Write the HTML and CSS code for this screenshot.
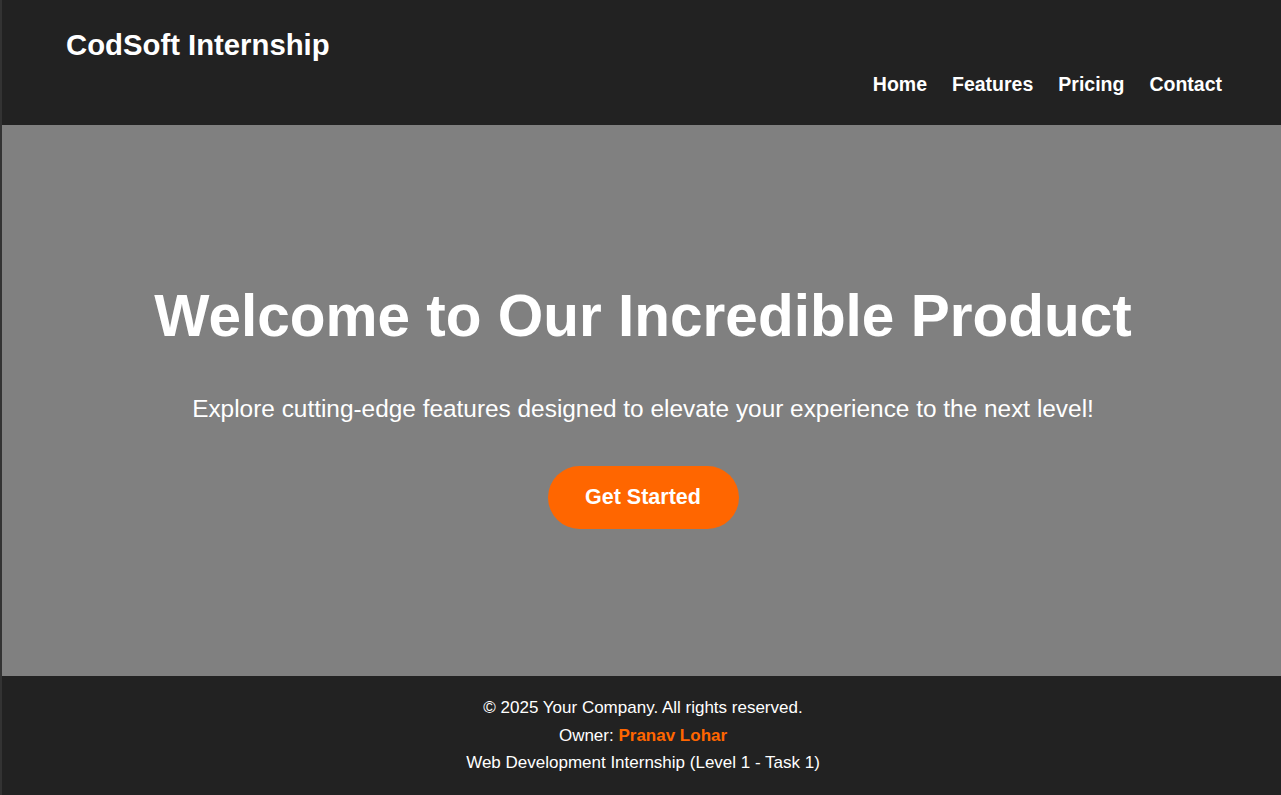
FILE: index.html
```html
<!DOCTYPE html>
<html lang="en">
<head>
<meta charset="utf-8">
<title>CodSoft Internship</title>
<link rel="stylesheet" href="styles.css">
</head>
<body>
  <header class="site-header">
    <div class="logo">CodSoft Internship</div>
    <nav class="nav">
      <a href="#">Home</a>
      <a href="#">Features</a>
      <a href="#">Pricing</a>
      <a href="#">Contact</a>
    </nav>
  </header>
  <main class="hero">
    <h1 class="hero-title">Welcome to Our Incredible Product</h1>
    <p class="hero-text">Explore cutting-edge features designed to elevate your experience to the next level!</p>
    <a class="cta" href="#">Get Started</a>
  </main>
  <footer class="site-footer">
    <p>&copy; 2025 Your Company. All rights reserved.</p>
    <p>Owner: <span class="owner">Pranav Lohar</span></p>
    <p>Web Development Internship (Level 1 - Task 1)</p>
  </footer>
</body>
</html>
```
FILE: styles.css
```css
html, body {
  margin: 0;
  padding: 0;
}
body {
  font-family: "Liberation Sans", Arial, sans-serif;
  color: #fff;
  background: #222;
  border-left: 2px solid #333;
  height: 795px;
  display: flex;
  flex-direction: column;
}
.site-header {
  background: #222;
  height: 125px;
  box-sizing: border-box;
  padding: 0 59px 0 64px;
  display: flex;
  justify-content: space-between;
  align-items: flex-start;
}
.logo {
  font-size: 29.3px;
  font-weight: bold;
  line-height: 32px;
  margin-top: 29px;
}
.nav {
  display: flex;
  gap: 25px;
  margin-top: 72px;
}
.nav a {
  color: #fff;
  text-decoration: none;
  font-weight: bold;
  font-size: 19.5px;
  line-height: 24px;
}
.hero {
  background: #808080;
  height: 551px;
  display: flex;
  flex-direction: column;
  align-items: center;
  padding-left: 3px;
  text-align: center;
}
.hero-title {
  margin: 158px 0 0;
  font-size: 58.5px;
  line-height: 66px;
  font-weight: bold;
}
.hero-text {
  margin: 46px 0 0;
  font-size: 24.4px;
  line-height: 28px;
}
.cta {
  margin-top: 43px;
  display: flex;
  align-items: center;
  justify-content: center;
  width: 191px;
  height: 63px;
  border-radius: 32px;
  background: #ff6600;
  color: #fff;
  text-decoration: none;
  font-weight: bold;
  font-size: 21.5px;
}
.site-footer {
  flex: 1;
  background: #222;
  padding: 18px 0 0 3px;
  text-align: center;
  font-size: 17px;
}
.site-footer p {
  margin: 0;
  line-height: 27.5px;
}
.owner {
  color: #ff6600;
  font-weight: bold;
}
```
